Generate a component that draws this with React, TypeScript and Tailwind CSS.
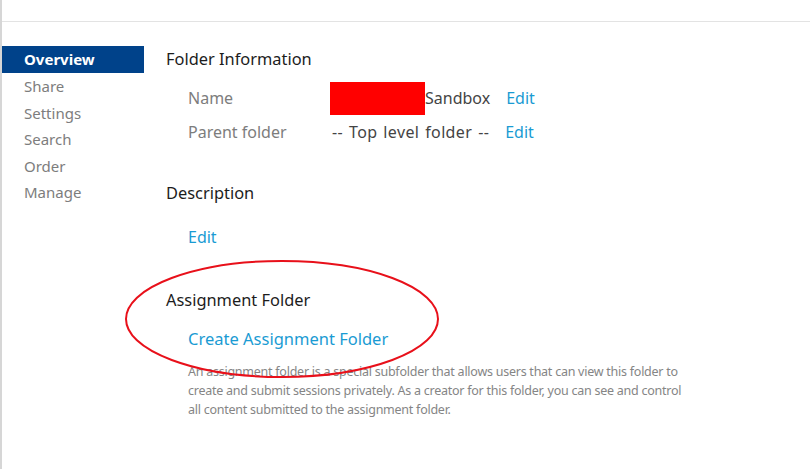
import React from "react";

const font = { fontFamily: '"Noto Sans", "Open Sans", sans-serif' };

export default function App() {
  const nav = ["Share", "Settings", "Search", "Order", "Manage"];
  return (
    <div className="relative w-[810px] h-[469px] bg-white overflow-hidden" style={font}>
      <div className="absolute left-0 top-0 bottom-0 w-[2px] bg-[#d6d6d6]" />
      <div className="h-[22px] border-b border-[#e3e3e3]" />
      <div className="flex pt-[24px]">
        <div className="w-[144px] pl-[2px] shrink-0">
          <div className="h-[27px] bg-[#00428a] text-white font-bold text-[15px] pl-[22px] flex items-center">
            Overview
          </div>
          {nav.map((n) => (
            <div key={n} className="h-[26.5px] pl-[22px] flex items-center text-[15px] text-[#7d7d7d]">
              {n}
            </div>
          ))}
        </div>
        <div className="pl-[22px] relative flex-1">
          <div className="h-[26px] flex items-center text-[16.4px] text-[#1c1c1c]">Folder Information</div>
          <div className="mt-[9px] pl-[22px] text-[16px]">
            <div className="h-[34px] flex items-center">
              <div className="w-[142px] text-[#7d7d7d]">Name</div>
              <div className="w-[95px] h-[33px] bg-[#ff0000]" />
              <div className="text-[#444]">Sandbox</div>
              <div className="ml-[16px] text-[#1a9bd3]">Edit</div>
            </div>
            <div className="h-[34px] flex items-center">
              <div className="w-[144px] text-[#7d7d7d]">Parent folder</div>
              <div className="text-[#444] tracking-[0.35px] [word-spacing:1.5px]">-- Top level folder --</div>
              <div className="ml-[16px] text-[#1a9bd3]">Edit</div>
            </div>
          </div>
          <div className="mt-[31px] h-[26px] flex items-center text-[16.4px] text-[#1c1c1c]">Description</div>
          <div className="mt-[18px] h-[26px] pl-[22px] flex items-center text-[16px] text-[#1a9bd3]">Edit</div>
          <div className="mt-[37px] h-[26px] flex items-center text-[16.4px] text-[#1c1c1c]">Assignment Folder</div>
          <div className="mt-[13px] h-[26px] pl-[22px] flex items-center text-[16.5px] text-[#1a9bd3]">
            Create Assignment Folder
          </div>
          <p className="mt-[10px] ml-[22px] w-[500px] text-[12.5px] tracking-[-0.25px] leading-[19px] text-[#858585]">
            An assignment folder is a special subfolder that allows users that can view this folder to create and
            submit sessions privately. As a creator for this folder, you can see and control all content submitted
            to the assignment folder.
          </p>
        </div>
      </div>
      <svg className="absolute left-0 top-0 pointer-events-none" width="810" height="469">
        <ellipse cx="282" cy="319" rx="156" ry="58" fill="none" stroke="#e8101a" strokeWidth="2" />
      </svg>
    </div>
  );
}
